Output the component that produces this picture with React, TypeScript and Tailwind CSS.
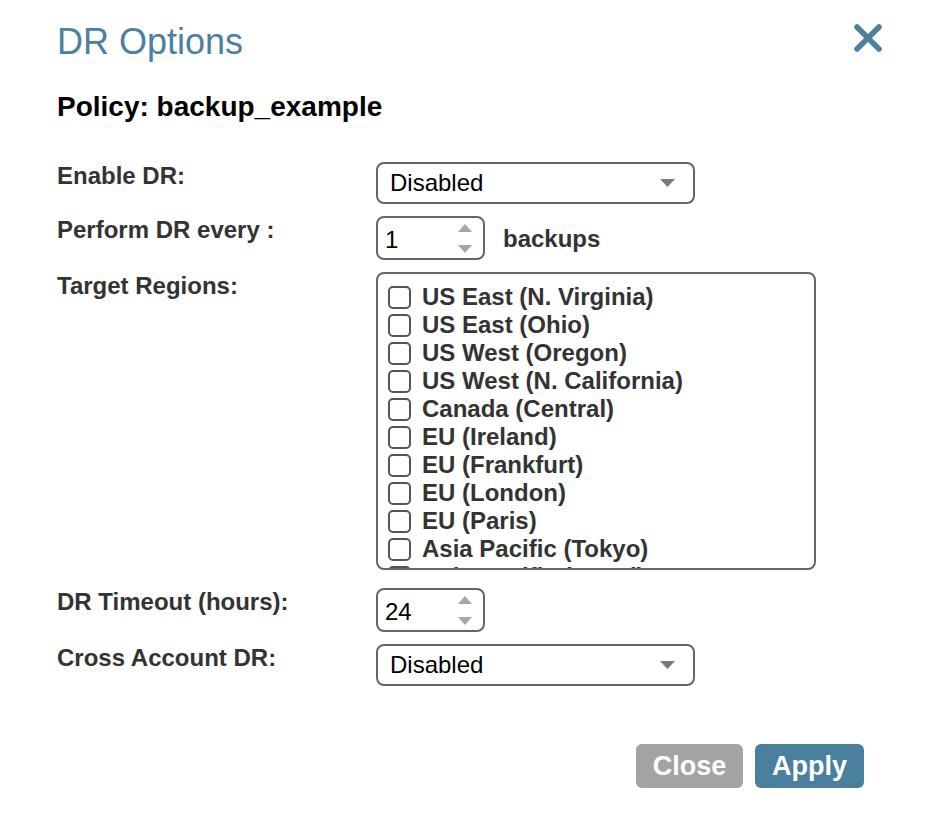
import React from 'react';

const regions = [
  'US East (N. Virginia)',
  'US East (Ohio)',
  'US West (Oregon)',
  'US West (N. California)',
  'Canada (Central)',
  'EU (Ireland)',
  'EU (Frankfurt)',
  'EU (London)',
  'EU (Paris)',
  'Asia Pacific (Tokyo)',
  'Asia Pacific (Seoul)',
  'Asia Pacific (Singapore)',
  'Asia Pacific (Sydney)',
];

const Caret = () => (
  <svg width="15" height="8" viewBox="0 0 15 8" className="shrink-0">
    <path d="M0 0 H15 L7.5 8 Z" fill="#7a7a7a" />
  </svg>
);

const Select = ({ value }: { value: string }) => (
  <div className="flex h-[42px] w-[319px] items-center justify-between rounded-[8px] border-2 border-[#666] bg-white pl-[12px] pr-[18px] text-[24px] text-black">
    <span>{value}</span>
    <Caret />
  </div>
);

const NumberBox = ({ value }: { value: string }) => (
  <div className="flex h-[44px] w-[109px] items-center justify-between rounded-[8px] border-2 border-[#666] bg-white pl-[7px] pr-[11px] text-[24px] text-black">
    <span className="pt-[3px]">{value}</span>
    <div className="flex flex-col gap-[13px]">
      <svg width="14" height="8" viewBox="0 0 14 8">
        <path d="M7 0 L14 8 H0 Z" fill="#a6a6a6" />
      </svg>
      <svg width="14" height="8" viewBox="0 0 14 8">
        <path d="M0 0 H14 L7 8 Z" fill="#a6a6a6" />
      </svg>
    </div>
  </div>
);

const Label = ({ children }: { children: React.ReactNode }) => (
  <div className="w-[319px] shrink-0 text-[24px] leading-[28px] font-bold text-[#333]">{children}</div>
);

export default function App() {
  return (
    <div className="min-h-screen w-[932px] bg-white font-['Liberation_Sans',Arial,sans-serif]">
      <div className="px-[57px] pt-[22px]">
        <div className="flex items-start justify-between">
          <h1 className="text-[36px] leading-[40px] text-[#4b80a0]">DR Options</h1>
          <button className="mr-[-7px] mt-[2px]">
            <svg width="28" height="28" viewBox="0 0 28 28">
              <path d="M3 3 L25 25 M25 3 L3 25" stroke="#4b80a0" strokeWidth="5.5" strokeLinecap="round" />
            </svg>
          </button>
        </div>

        <h2 className="mt-[29px] text-[28px] leading-[32px] font-bold text-black">Policy: backup_example</h2>

        <div className="mt-[39px] flex flex-col">
          <div className="flex">
            <Label>Enable DR:</Label>
            <Select value="Disabled" />
          </div>

          <div className="mt-[12px] flex">
            <Label>Perform DR every :</Label>
            <NumberBox value="1" />
            <span className="ml-[18px] self-center pt-[2px] text-[24px] font-bold text-[#333]">backups</span>
          </div>

          <div className="mt-[12px] flex">
            <Label>Target Regions:</Label>
            <div className="h-[298px] w-[440px] overflow-hidden rounded-[8px] border-2 border-[#666] bg-white pl-[10px] pt-[9px]">
              {regions.map((r) => (
                <label key={r} className="flex h-[28px] items-center gap-[11px] text-[24px] leading-[28px] font-bold text-[#333]">
                  <span className="h-[23px] w-[23px] shrink-0 rounded-[5px] border-2 border-[#555] bg-white" />
                  <span>{r}</span>
                </label>
              ))}
            </div>
          </div>

          <div className="mt-[18px] flex">
            <Label>DR Timeout (hours):</Label>
            <NumberBox value="24" />
          </div>

          <div className="mt-[12px] flex">
            <Label>Cross Account DR:</Label>
            <Select value="Disabled" />
          </div>
        </div>

        <div className="mt-[58px] mr-[11px] flex justify-end gap-[12px]">
          <button className="h-[44px] w-[107px] rounded-[6px] bg-[#a3a3a3] text-[27px] font-bold text-white">Close</button>
          <button className="h-[44px] w-[109px] rounded-[6px] bg-[#4a7f9e] text-[27px] font-bold text-white">Apply</button>
        </div>
      </div>
    </div>
  );
}
